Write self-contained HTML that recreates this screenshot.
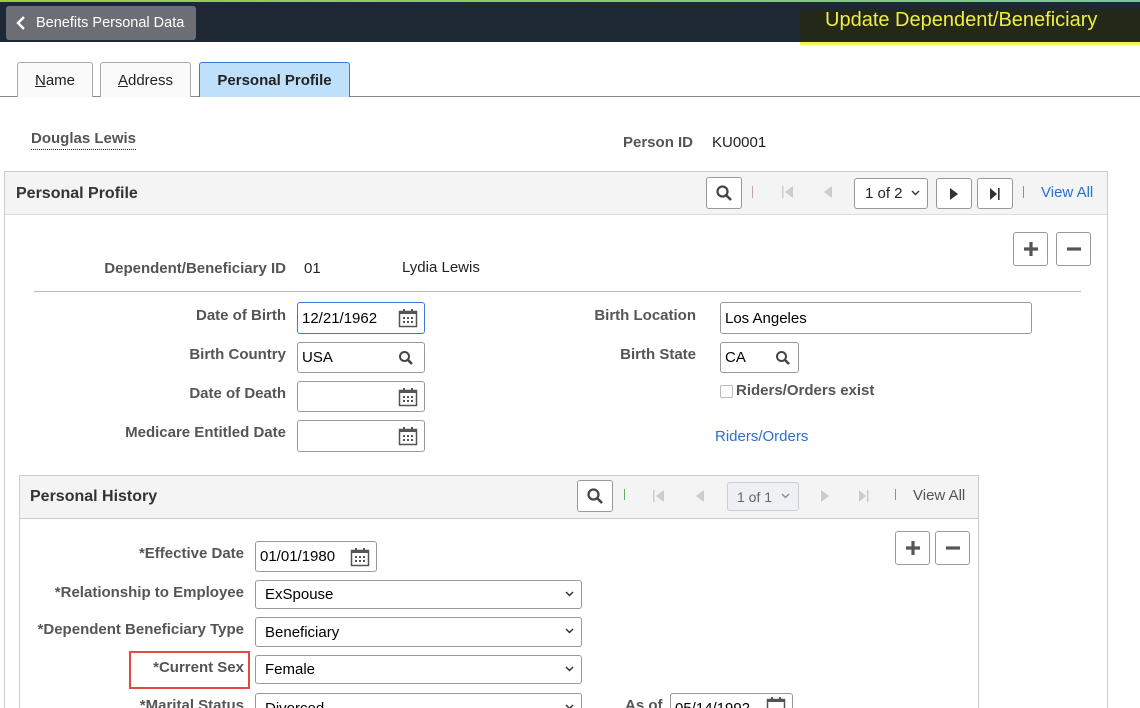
<!DOCTYPE html>
<html style="overflow:hidden;height:708px"><head><style>
*{box-sizing:border-box;margin:0;padding:0}
body{width:1140px;height:708px;overflow:hidden;background:#fff;font-family:"Liberation Sans",Arial,sans-serif;font-size:14px;color:#333;position:relative}
.a{position:absolute}
.lbl{position:absolute;font-weight:bold;color:#555;font-size:15px;text-align:right;white-space:nowrap}
.inp{position:absolute;border:1px solid #999;border-radius:3px;background:#fff;font-size:15px;color:#000;padding-left:6px;display:flex;align-items:center}
.btn{position:absolute;border:1px solid #999;border-radius:3px;background:#fff;display:flex;align-items:center;justify-content:center}
.cal{position:absolute;right:6px;top:50%;margin-top:-10px}
.chev{position:absolute;right:7px;top:50%;margin-top:-4px}
</style></head><body>
<div class="a" style="left:0;top:0;width:1140px;height:42px;background:#1e2835"></div>
<div class="a" style="left:0;top:0;width:1140px;height:2px;background:linear-gradient(90deg,#9ccc3c,#7cc4a0)"></div>
<div class="a" style="left:6px;top:6px;width:190px;height:34px;background:#6b6f75;border-radius:3px;color:#fff;font-size:14.5px;line-height:34px;padding-left:30px">Benefits Personal Data</div>
<svg class="a" style="left:16px;top:15px" width="10" height="16"><path d="M8 2 L2 8 L8 14" stroke="#fff" stroke-width="2.4" fill="none"/></svg>
<div class="a" style="left:800px;top:10px;width:340px;height:35px;background:#232818;border-bottom:3px solid #f4f44a"></div>
<div class="a" style="left:825px;top:9px;color:#eeee44;font-size:20px">Update Dependent/Beneficiary</div>

<div class="a" style="left:0;top:96px;width:1140px;height:1px;background:#888"></div>
<div class="a" style="left:17px;top:62px;width:76px;height:35px;border:1px solid #aaa;border-bottom:none;border-radius:3px 3px 0 0;background:#fafafa;text-align:center;line-height:35px;color:#222;font-size:15px"><u>N</u>ame</div>
<div class="a" style="left:100px;top:62px;width:91px;height:35px;border:1px solid #aaa;border-bottom:none;border-radius:3px 3px 0 0;background:#fafafa;text-align:center;line-height:35px;color:#222;font-size:15px"><u>A</u>ddress</div>
<div class="a" style="left:199px;top:62px;width:151px;height:35px;border:1px solid #3a7bd5;border-bottom:none;border-radius:3px 3px 0 0;background:#bfe0fb;text-align:center;line-height:35px;font-weight:bold;color:#222;font-size:15px">Personal Profile</div>

<div class="a" style="left:31px;top:130px;font-weight:bold;color:#555;border-bottom:1px dotted #333;padding-bottom:2px;font-size:15px">Douglas Lewis</div>
<div class="lbl" style="left:623px;top:134px">Person ID</div>
<div class="a" style="left:712px;top:134px;color:#222;font-size:15px">KU0001</div>

<div class="a" style="left:4px;top:171px;width:1104px;height:537px;border:1px solid #ccc;border-bottom:none"></div>
<div class="a" style="left:5px;top:172px;width:1102px;height:43px;background:#f4f4f4;border-bottom:1px solid #ddd"></div>
<div class="a" style="left:16px;top:185px;font-weight:bold;font-size:16px;color:#333">Personal Profile</div>
<div class="btn" style="left:706px;top:177px;width:36px;height:32px"><svg width="18" height="18"><circle cx="7.5" cy="7.5" r="5" stroke="#444" stroke-width="2.2" fill="none"/><path d="M11 11 L16 16" stroke="#444" stroke-width="2.6"/></svg></div>
<div class="a" style="left:752px;top:186px;width:1px;height:12px;background:#c0a0c0"></div>
<svg class="a" style="left:782px;top:185px" width="12" height="14"><rect x="0" y="1" width="1.5" height="12" fill="#ccc"/><path d="M11 1 L3 7 L11 13Z" fill="#ccc"/></svg>
<svg class="a" style="left:822px;top:185px" width="12" height="14"><path d="M10 1 L2 7 L10 13Z" fill="#ccc"/></svg>
<div class="btn" style="left:854px;top:178px;width:74px;height:31px;justify-content:flex-start;padding-left:10px;color:#222;font-size:15px">1 of 2<svg class="chev" width="9" height="6"><path d="M1 1 L4.5 4.5 L8 1" stroke="#333" stroke-width="1.4" fill="none"/></svg></div>
<div class="btn" style="left:936px;top:178px;width:36px;height:31px"><svg width="10" height="14"><path d="M1 1 L9 7 L1 13Z" fill="#333"/></svg></div>
<div class="btn" style="left:977px;top:178px;width:36px;height:31px"><svg width="12" height="14"><path d="M1 1 L8 7 L1 13Z" fill="#333"/><rect x="9" y="1" width="1.6" height="12" fill="#333"/></svg></div>
<div class="a" style="left:1023px;top:186px;width:1px;height:12px;background:#6a6"></div>
<div class="a" style="left:1041px;top:184px;color:#2b6fd0;font-size:15px">View All</div>

<div class="btn" style="left:1013px;top:232px;width:35px;height:34px"><svg width="16" height="16"><path d="M8 1V15M1 8H15" stroke="#555" stroke-width="3.2"/></svg></div>
<div class="btn" style="left:1056px;top:232px;width:35px;height:34px"><svg width="16" height="16"><path d="M1 8H15" stroke="#555" stroke-width="3.2"/></svg></div>

<div class="lbl" style="right:854px;top:260px">Dependent/Beneficiary ID</div>
<div class="a" style="left:304px;top:260px;color:#222;font-size:15px">01</div>
<div class="a" style="left:402px;top:259px;color:#222;font-size:15px">Lydia Lewis</div>
<div class="a" style="left:34px;top:291px;width:1047px;height:1px;background:#bbb"></div>

<div class="lbl" style="right:854px;top:307px">Date of Birth</div>
<div class="inp" style="left:297px;top:302px;width:128px;height:32px;border-color:#3a7bd5;padding-left:4px">12/21/1962<svg class="cal" width="20" height="20"><rect x="1.5" y="3.5" width="17" height="15" stroke="#555" stroke-width="1.5" fill="none"/><rect x="1" y="3" width="18" height="3" fill="#555"/><rect x="5" y="1" width="2" height="4" fill="#555"/><rect x="13" y="1" width="2" height="4" fill="#555"/><path d="M5 10h2M9 10h2M13 10h2M5 14h2M9 14h2M13 14h2" stroke="#555" stroke-width="2"/></svg></div>
<div class="lbl" style="right:854px;top:346px">Birth Country</div>
<div class="inp" style="left:297px;top:342px;width:128px;height:31px;padding-left:4px">USA<svg class="cal" style="margin-top:-8px;right:10px" width="16" height="16"><circle cx="6.5" cy="6.5" r="4.5" stroke="#444" stroke-width="2" fill="none"/><path d="M10 10 L14 14" stroke="#444" stroke-width="2.5"/></svg></div>
<div class="lbl" style="right:854px;top:385px">Date of Death</div>
<div class="inp" style="left:297px;top:381px;width:128px;height:31px"><svg class="cal" width="20" height="20"><rect x="1.5" y="3.5" width="17" height="15" stroke="#555" stroke-width="1.5" fill="none"/><rect x="1" y="3" width="18" height="3" fill="#555"/><rect x="5" y="1" width="2" height="4" fill="#555"/><rect x="13" y="1" width="2" height="4" fill="#555"/><path d="M5 10h2M9 10h2M13 10h2M5 14h2M9 14h2M13 14h2" stroke="#555" stroke-width="2"/></svg></div>
<div class="lbl" style="right:854px;top:424px">Medicare Entitled Date</div>
<div class="inp" style="left:297px;top:420px;width:128px;height:32px"><svg class="cal" width="20" height="20"><rect x="1.5" y="3.5" width="17" height="15" stroke="#555" stroke-width="1.5" fill="none"/><rect x="1" y="3" width="18" height="3" fill="#555"/><rect x="5" y="1" width="2" height="4" fill="#555"/><rect x="13" y="1" width="2" height="4" fill="#555"/><path d="M5 10h2M9 10h2M13 10h2M5 14h2M9 14h2M13 14h2" stroke="#555" stroke-width="2"/></svg></div>

<div class="lbl" style="right:444px;top:307px">Birth Location</div>
<div class="inp" style="left:720px;top:302px;width:312px;height:32px;padding-left:4px">Los Angeles</div>
<div class="lbl" style="right:444px;top:346px">Birth State</div>
<div class="inp" style="left:720px;top:342px;width:79px;height:31px;padding-left:4px">CA<svg class="cal" style="margin-top:-8px;right:7px" width="16" height="16"><circle cx="6.5" cy="6.5" r="4.5" stroke="#444" stroke-width="2" fill="none"/><path d="M10 10 L14 14" stroke="#444" stroke-width="2.5"/></svg></div>
<div class="a" style="left:720px;top:385px;width:13px;height:13px;border:1px solid #bbb;border-radius:2px"></div>
<div class="a" style="left:736px;top:382px;font-weight:bold;color:#555;font-size:15px">Riders/Orders exist</div>
<div class="a" style="left:715px;top:428px;color:#2b6fd0;font-size:15px">Riders/Orders</div>

<div class="a" style="left:19px;top:475px;width:960px;height:233px;border:1px solid #ccc;border-bottom:none"></div>
<div class="a" style="left:20px;top:476px;width:958px;height:43px;background:#f4f4f4;border-bottom:1px solid #ccc"></div>
<div class="a" style="left:30px;top:488px;font-weight:bold;font-size:16px;color:#333">Personal History</div>
<div class="btn" style="left:577px;top:480px;width:36px;height:32px"><svg width="18" height="18"><circle cx="7.5" cy="7.5" r="5" stroke="#444" stroke-width="2.2" fill="none"/><path d="M11 11 L16 16" stroke="#444" stroke-width="2.6"/></svg></div>
<div class="a" style="left:624px;top:489px;width:1px;height:11px;background:#6a6"></div>
<svg class="a" style="left:653px;top:489px" width="12" height="14"><rect x="0" y="1" width="1.5" height="12" fill="#ccc"/><path d="M11 1 L3 7 L11 13Z" fill="#ccc"/></svg>
<svg class="a" style="left:694px;top:489px" width="12" height="14"><path d="M10 1 L2 7 L10 13Z" fill="#ccc"/></svg>
<div class="btn" style="left:727px;top:482px;width:72px;height:29px;border-color:#ccd;background:#eef0f4;justify-content:flex-start;padding-left:9px;color:#666;font-size:14px;white-space:nowrap">1 of 1<svg class="chev" style="right:8px" width="9" height="6"><path d="M1 1 L4.5 4.5 L8 1" stroke="#888" stroke-width="1.3" fill="none"/></svg></div>
<svg class="a" style="left:820px;top:489px" width="10" height="14"><path d="M1 1 L9 7 L1 13Z" fill="#ccc"/></svg>
<svg class="a" style="left:858px;top:489px" width="12" height="14"><path d="M1 1 L8 7 L1 13Z" fill="#ccc"/><rect x="9" y="1" width="1.5" height="12" fill="#ccc"/></svg>
<div class="a" style="left:895px;top:489px;width:1px;height:11px;background:#6a6"></div>
<div class="a" style="left:913px;top:487px;color:#555;font-size:15px">View All</div>

<div class="btn" style="left:895px;top:531px;width:35px;height:34px"><svg width="16" height="16"><path d="M8 1V15M1 8H15" stroke="#555" stroke-width="3.2"/></svg></div>
<div class="btn" style="left:935px;top:531px;width:35px;height:34px"><svg width="16" height="16"><path d="M1 8H15" stroke="#555" stroke-width="3.2"/></svg></div>

<div class="lbl" style="right:896px;top:545px">*Effective Date</div>
<div class="inp" style="left:255px;top:541px;width:122px;height:31px;padding-left:4px">01/01/1980<svg class="cal" width="20" height="20"><rect x="1.5" y="3.5" width="17" height="15" stroke="#555" stroke-width="1.5" fill="none"/><rect x="1" y="3" width="18" height="3" fill="#555"/><rect x="5" y="1" width="2" height="4" fill="#555"/><rect x="13" y="1" width="2" height="4" fill="#555"/><path d="M5 10h2M9 10h2M13 10h2M5 14h2M9 14h2M13 14h2" stroke="#555" stroke-width="2"/></svg></div>
<div class="lbl" style="right:896px;top:584px">*Relationship to Employee</div>
<div class="inp" style="left:255px;top:580px;width:327px;height:29px;padding-left:9px">ExSpouse<svg class="chev" width="9" height="6"><path d="M1 1 L4.5 4.5 L8 1" stroke="#333" stroke-width="1.5" fill="none"/></svg></div>
<div class="lbl" style="right:896px;top:621px">*Dependent Beneficiary Type</div>
<div class="inp" style="left:255px;top:617px;width:327px;height:30px;padding-left:9px">Beneficiary<svg class="chev" width="9" height="6"><path d="M1 1 L4.5 4.5 L8 1" stroke="#333" stroke-width="1.5" fill="none"/></svg></div>
<div class="lbl" style="right:896px;top:659px">*Current Sex</div>
<div class="a" style="left:129px;top:651px;width:121px;height:38px;border:2px solid #e04a3f"></div>
<div class="inp" style="left:255px;top:655px;width:327px;height:29px;padding-left:9px">Female<svg class="chev" width="9" height="6"><path d="M1 1 L4.5 4.5 L8 1" stroke="#333" stroke-width="1.5" fill="none"/></svg></div>
<div class="lbl" style="right:896px;top:697px">*Marital Status</div>
<div class="inp" style="left:255px;top:693px;width:327px;height:15px;padding-left:9px;align-items:flex-start;padding-top:6px;overflow:hidden;border-bottom:none;border-radius:3px 3px 0 0">Divorced<svg class="chev" style="top:10px;margin-top:0" width="9" height="6"><path d="M1 1 L4.5 4.5 L8 1" stroke="#333" stroke-width="1.5" fill="none"/></svg></div>
<div class="lbl" style="left:625px;top:697px">As of</div>
<div class="inp" style="left:670px;top:693px;width:123px;height:15px;padding-left:4px;align-items:flex-start;padding-top:6px;overflow:hidden;border-bottom:none;border-radius:3px 3px 0 0">05/14/1992<svg class="cal" style="top:2px;margin-top:0" width="20" height="20"><rect x="1.5" y="3.5" width="17" height="15" stroke="#555" stroke-width="1.5" fill="none"/><rect x="1" y="3" width="18" height="3" fill="#555"/><rect x="5" y="1" width="2" height="4" fill="#555"/><rect x="13" y="1" width="2" height="4" fill="#555"/></svg></div>
</body></html>
